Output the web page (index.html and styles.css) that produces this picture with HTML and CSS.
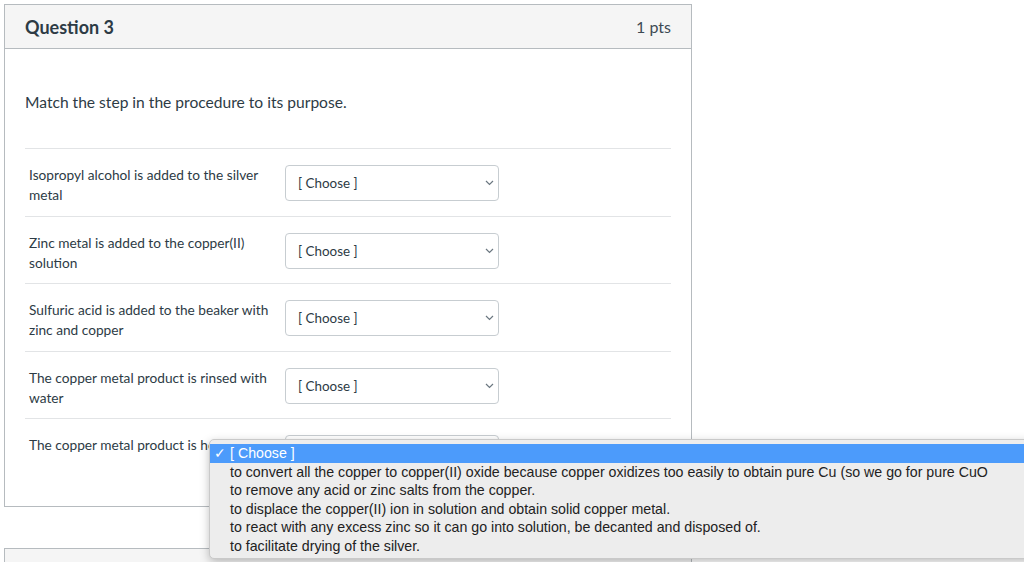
FILE: index.html
```html
<!DOCTYPE html>
<html lang="en">
<head>
<meta charset="utf-8">
<title>Question 3</title>
<link rel="stylesheet" href="styles.css">
</head>
<body>
<div class="page">
  <div class="question">
    <div class="question-header">
      <span class="question-name">Question 3</span>
      <span class="question-points">1 pts</span>
    </div>
    <div class="question-body">
      <p class="question-text">Match the step in the procedure to its purpose.</p>
      <div class="answers">
        <div class="answer">
          <div class="answer-label">Isopropyl alcohol is added to the silver metal</div>
          <div class="select"><span>[ Choose ]</span>
            <svg class="chevron" width="9" height="6" viewBox="0 0 9 6"><path d="M1 1l3.5 3.5L8 1" fill="none" stroke="#6b7780" stroke-width="1.2"/></svg>
          </div>
        </div>
        <div class="answer">
          <div class="answer-label">Zinc metal is added to the copper(II) solution</div>
          <div class="select"><span>[ Choose ]</span>
            <svg class="chevron" width="9" height="6" viewBox="0 0 9 6"><path d="M1 1l3.5 3.5L8 1" fill="none" stroke="#6b7780" stroke-width="1.2"/></svg>
          </div>
        </div>
        <div class="answer">
          <div class="answer-label">Sulfuric acid is added to the beaker with zinc and copper</div>
          <div class="select"><span>[ Choose ]</span>
            <svg class="chevron" width="9" height="6" viewBox="0 0 9 6"><path d="M1 1l3.5 3.5L8 1" fill="none" stroke="#6b7780" stroke-width="1.2"/></svg>
          </div>
        </div>
        <div class="answer">
          <div class="answer-label">The copper metal product is rinsed with water</div>
          <div class="select"><span>[ Choose ]</span>
            <svg class="chevron" width="9" height="6" viewBox="0 0 9 6"><path d="M1 1l3.5 3.5L8 1" fill="none" stroke="#6b7780" stroke-width="1.2"/></svg>
          </div>
        </div>
        <div class="answer">
          <div class="answer-label">The copper metal product is heated</div>
          <div class="select"><span>[ Choose ]</span>
            <svg class="chevron" width="9" height="6" viewBox="0 0 9 6"><path d="M1 1l3.5 3.5L8 1" fill="none" stroke="#6b7780" stroke-width="1.2"/></svg>
          </div>
        </div>
      </div>
    </div>
  </div>

  <div class="question next">
    <div class="question-header"></div>
  </div>
</div>

<!-- open native menu of the last select -->
<ul class="menu">
  <li class="selected"><span class="check">✓</span>[ Choose ]</li>
  <li>to convert all the copper to copper(II) oxide because copper oxidizes too easily to obtain pure Cu (so we go for pure CuO</li>
  <li>to remove any acid or zinc salts from the copper.</li>
  <li>to displace the copper(II) ion in solution and obtain solid copper metal.</li>
  <li>to react with any excess zinc so it can go into solution, be decanted and disposed of.</li>
  <li>to facilitate drying of the silver.</li>
</ul>
</body>
</html>
```

FILE: styles.css
```css
html, body { margin: 0; padding: 0; overflow: hidden; background: #fff; }
body { font-family: Lato, "Open Sans", sans-serif; color: #2d3b45; }

.page { padding: 4px; }

.question { width: 688px; box-sizing: border-box; border: 1px solid #b6bbbf; background: #fff; }
.question.next { margin-top: 41px; }

.question-header {
  height: 43px;
  background: #f5f5f5;
  border-bottom: 1px solid #b6bbbf;
  display: flex;
  align-items: center;
  justify-content: space-between;
  padding: 0 20px;
}
.question-name { font-size: 18px; font-weight: bold; }
.question-points { font-size: 16px; color: #3d4a53; }

.question-body { padding: 0 20px 20px; }
.question-text { margin: 0 0 35px; padding-top: 42px; font-size: 15.6px; line-height: 22px; }

.answer {
  display: flex;
  align-items: flex-start;
  height: 36px;
  border-top: 1px solid #e2e4e6;
  padding: 16px 0 14.5px;
}
.answer-label {
  width: 248px;
  padding-left: 4px;
  margin-right: 8px;
  font-size: 13.7px;
  line-height: 20px;
}

.select {
  width: 214px;
  height: 36px;
  box-sizing: border-box;
  border: 1px solid #c7cdd1;
  border-radius: 4px;
  background: #fff;
  display: flex;
  align-items: center;
  justify-content: space-between;
  padding: 0 4px 0 12px;
  font-size: 13.4px;
}
.chevron { display: block; }

.menu {
  position: absolute;
  left: 209px;
  top: 439px;
  width: 840px;
  margin: 0;
  padding: 4px 0 3px;
  list-style: none;
  background: #ededed;
  border: 1px solid #c9c9c9;
  border-radius: 5px;
  box-shadow: 0 3px 10px rgba(0, 0, 0, 0.25);
  font-family: "Liberation Sans", Arial, sans-serif;
  font-size: 14.2px;
  color: #222;
}
.menu li { height: 18.5px; line-height: 18.5px; padding-left: 20px; white-space: nowrap; }
.menu li.selected { background: #4c9bfb; color: #fff; padding-left: 4px; }
.check { display: inline-block; width: 16px; }
```
